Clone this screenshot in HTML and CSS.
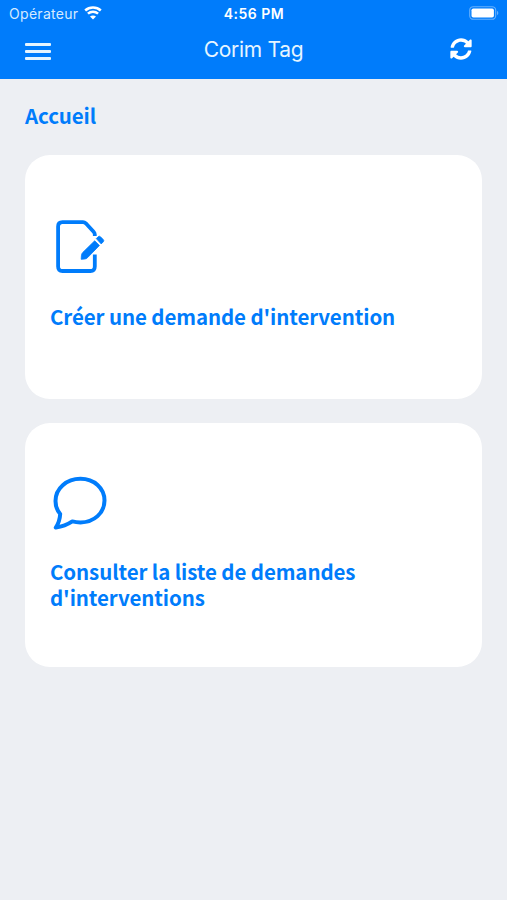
FILE: index.html
```html
<!DOCTYPE html>
<html lang="fr">

<head>
    <meta charset="UTF-8">
    <meta name="viewport" content="width=device-width, initial-scale=1.0">
    <title>Corim Tag</title>
    <link rel="stylesheet" href="styles.css">
</head>

<body>

    <header class="header">
        <!-- Status bar -->
        <div class="status-bar">
            <div class="carrier">
                <span>Opérateur</span>
                <svg class="wifi" viewBox="0 0 18 14">
                    <path d="M1.2 4.5C5.6.5 12.4.5 16.8 4.5M3.9 7.6c2.9-2.6 7.3-2.6 10.2 0" fill="none" stroke="#fff" stroke-width="2.5" />
                    <path d="M9 13.6L6 10.6c1.7-1.6 4.3-1.6 6 0z" fill="#fff" />
                </svg>
            </div>
            <span class="time">4:56 PM</span>
            <div class="battery-side">
                <svg class="battery" viewBox="0 0 30 14">
                    <rect x=".7" y=".7" width="26" height="12.6" rx="3.6" fill="none" stroke="#fff" stroke-opacity=".4" stroke-width="1.1" />
                    <rect x="2.5" y="2.5" width="22.4" height="9" rx="1.8" fill="#fff" />
                    <path d="M28 4.8c1.8.9 1.8 3.5 0 4.4z" fill="#fff" fill-opacity=".4" />
                </svg>
            </div>
        </div>

        <!-- Navbar -->
        <div class="navbar">
            <button class="menu" aria-label="Menu">
                <span></span>
                <span></span>
                <span></span>
            </button>
            <span class="title">Corim Tag</span>
            <button class="refresh" aria-label="Actualiser">
                <svg viewBox="0 0 512 512">
                    <path fill="#fff" d="M371 134c-31-29-71-45-114-45-77 0-144 53-162 126-2 5-6 9-12 9H26c-8 0-13-7-12-14C35 94 136 8 257 8c66 0 127 26 171 69l35-35c15-15 41-5 41 17v134c0 13-11 24-24 24H346c-21 0-32-26-17-41l42-42z" />
                    <path fill="#fff" transform="rotate(180 256 256)" d="M371 134c-31-29-71-45-114-45-77 0-144 53-162 126-2 5-6 9-12 9H26c-8 0-13-7-12-14C35 94 136 8 257 8c66 0 127 26 171 69l35-35c15-15 41-5 41 17v134c0 13-11 24-24 24H346c-21 0-32-26-17-41l42-42z" />
                </svg>
            </button>
        </div>
    </header>

    <main class="content">
        <h1>Accueil</h1>

        <a href="#" class="card">
            <svg class="card-icon" viewBox="0 0 60 60">
                <path d="M44.8 19V17.500Q44.800 16 43.600 14.700L35.800 6.300Q34.600 5.100 33 5.100H12.500Q8.100 5.100 8.100 9.500V49.500Q8.100 54 12.500 54H40.400Q44.800 54 44.800 49.500V37.500" fill="none" stroke="#007cfb" stroke-width="3.8" />
                <path d="M44.700 23.800L49.400 28.500 37.800 40.400Q36.400 42 34.300 42.100L31.200 42.300 31.400 38.800Q31.500 36.600 33 35.200z" fill="#007cfb" stroke="#007cfb" stroke-width=".8" stroke-linejoin="round" />
                <path d="M46.300 21.600l1.800-1.800q1.200-1.200 2.400 0l2.700 2.700q1.200 1.200 0 2.400l-2 2z" fill="#007cfb" stroke="#007cfb" stroke-width=".8" stroke-linejoin="round" />
            </svg>
            <h2>Créer une demande d'intervention</h2>
        </a>

        <a href="#" class="card">
            <svg class="card-icon" viewBox="0 0 60 60">
                <path d="M22.3 49.4C25 50.1 27.5 50.4 30.5 50.4C44 50.4 54.5 41 54.5 28.5C54.5 16 44 6.800 30.5 6.800C16.5 6.800 5.500 16.500 5.500 29C5.500 34 7 38.300 10.200 42Q9.800 49.300 5.800 55.500Q15 54.300 22.300 49.400Z" fill="none" stroke="#007cfb" stroke-width="4" stroke-linejoin="round" />
            </svg>
            <h2>Consulter la liste de demandes d'interventions</h2>
        </a>
    </main>

</body>

</html>
```
FILE: styles.css
```css
/* Global Styles */
body {
    font-family: "Noto Sans CJK SC", "Noto Sans", sans-serif;
    background-color: #edeff3;
    color: #007cfb;
    margin: 0;
    padding: 0;
}

button {
    background: none;
    border: none;
    padding: 0;
}

/* Header */
.header {
    background-color: #007cfb;
    color: white;
    height: 79px;
    font-family: Inter, sans-serif;
}

.status-bar {
    display: grid;
    grid-template-columns: 1fr auto 1fr;
    align-items: center;
    height: 27px;
    padding: 0 8px 0 9px;
}

.carrier {
    display: flex;
    align-items: center;
    gap: 6px;
    font-size: 14px;
    letter-spacing: 0.3px;
    color: #d5eaff;
}

.wifi {
    width: 18px;
    height: 14px;
    margin-bottom: 1px;
}

.time {
    font-size: 14px;
    font-weight: 600;
    letter-spacing: 0.5px;
}

.battery-side {
    display: flex;
    justify-content: flex-end;
}

.battery {
    width: 30px;
    height: 14px;
    margin-bottom: 1px;
}

/* Navbar */
.navbar {
    display: grid;
    grid-template-columns: 1fr auto 1fr;
    align-items: center;
    height: 46px;
    padding: 0 35px 0 25px;
}

.menu {
    display: flex;
    flex-direction: column;
    gap: 4px;
    width: 26px;
    margin-top: 3px;
}

.menu span {
    height: 3px;
    border-radius: 1px;
    background-color: #e6f5ff;
}

.title {
    font-size: 21px;
    letter-spacing: -0.3px;
    padding-left: 10px;
    margin-bottom: 1px;
    color: #e6f5ff;
}

.refresh {
    justify-self: end;
    width: 22px;
    height: 22px;
    margin-bottom: 2px;
}

.refresh svg {
    display: block;
}

/* Home Page */
.content {
    padding: 23px 25px;
}

h1,
h2 {
    font-size: 20.5px;
    font-weight: 700;
    line-height: 26px;
    letter-spacing: -0.1px;
    margin: 0;
}

h1 {
    margin-bottom: 27px;
}

/* Cards */
.card {
    display: flex;
    flex-direction: column;
    justify-content: center;
    box-sizing: border-box;
    height: 244px;
    padding: 0 25px 8px;
    margin-bottom: 24px;
    border-radius: 25px;
    background-color: white;
    color: inherit;
    text-decoration: none;
}

.card-icon {
    width: 60px;
    height: 60px;
    margin-bottom: 26px;
}
```
